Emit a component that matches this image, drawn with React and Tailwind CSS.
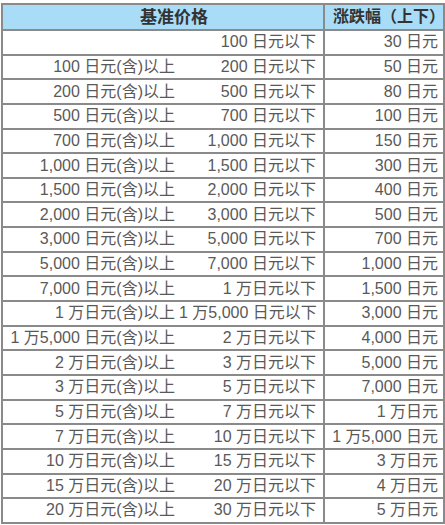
const rows = [
  ["", "100 日元以下", "30 日元"],
  ["100 日元(含)以上", "200 日元以下", "50 日元"],
  ["200 日元(含)以上", "500 日元以下", "80 日元"],
  ["500 日元(含)以上", "700 日元以下", "100 日元"],
  ["700 日元(含)以上", "1,000 日元以下", "150 日元"],
  ["1,000 日元(含)以上", "1,500 日元以下", "300 日元"],
  ["1,500 日元(含)以上", "2,000 日元以下", "400 日元"],
  ["2,000 日元(含)以上", "3,000 日元以下", "500 日元"],
  ["3,000 日元(含)以上", "5,000 日元以下", "700 日元"],
  ["5,000 日元(含)以上", "7,000 日元以下", "1,000 日元"],
  ["7,000 日元(含)以上", "1 万日元以下", "1,500 日元"],
  ["1 万日元(含)以上", "1 万5,000 日元以下", "3,000 日元"],
  ["1 万5,000 日元(含)以上", "2 万日元以下", "4,000 日元"],
  ["2 万日元(含)以上", "3 万日元以下", "5,000 日元"],
  ["3 万日元(含)以上", "5 万日元以下", "7,000 日元"],
  ["5 万日元(含)以上", "7 万日元以下", "1 万日元"],
  ["7 万日元(含)以上", "10 万日元以下", "1 万5,000 日元"],
  ["10 万日元(含)以上", "15 万日元以下", "3 万日元"],
  ["15 万日元(含)以上", "20 万日元以下", "4 万日元"],
  ["20 万日元(含)以上", "30 万日元以下", "5 万日元"],
]

export default function App() {
  return (
    <div
      className="w-[445px] h-[525px] bg-white pt-[3px] pl-[1px] overflow-hidden"
      style={{ fontFamily: '"Liberation Sans", "Noto Sans CJK SC", sans-serif' }}
    >
      <table className="w-[442px] border-collapse text-[16px] text-[#595959] table-fixed">
        <colgroup>
          <col className="w-[177px]" />
          <col className="w-[145px]" />
          <col className="w-[120px]" />
        </colgroup>
        <thead>
          <tr className="h-[26px] bg-[#a9dcf6]">
            <th colSpan={2} className="border-2 border-[#8a8a8a] font-bold text-[17px] text-[#333] text-center pl-[22px] leading-none">
              基准价格
            </th>
            <th className="border-2 border-[#8a8a8a] font-bold text-[16px] text-[#333] text-left pl-[8px] leading-none whitespace-nowrap">
              涨跌幅（上下）
            </th>
          </tr>
        </thead>
        <tbody>
          {rows.map((r, i) => (
            <tr key={i} className="h-[24.65px]">
              <td className="border-y-2 border-l-2 border-[#8a8a8a] text-right pr-[4px] leading-none whitespace-nowrap">
                {r[0]}
              </td>
              <td className="border-y-2 border-r-2 border-[#8a8a8a] text-right pr-[7px] leading-none whitespace-nowrap">
                {r[1]}
              </td>
              <td className="border-2 border-[#8a8a8a] text-right pr-[5px] leading-none whitespace-nowrap">
                {r[2]}
              </td>
            </tr>
          ))}
        </tbody>
      </table>
    </div>
  )
}
